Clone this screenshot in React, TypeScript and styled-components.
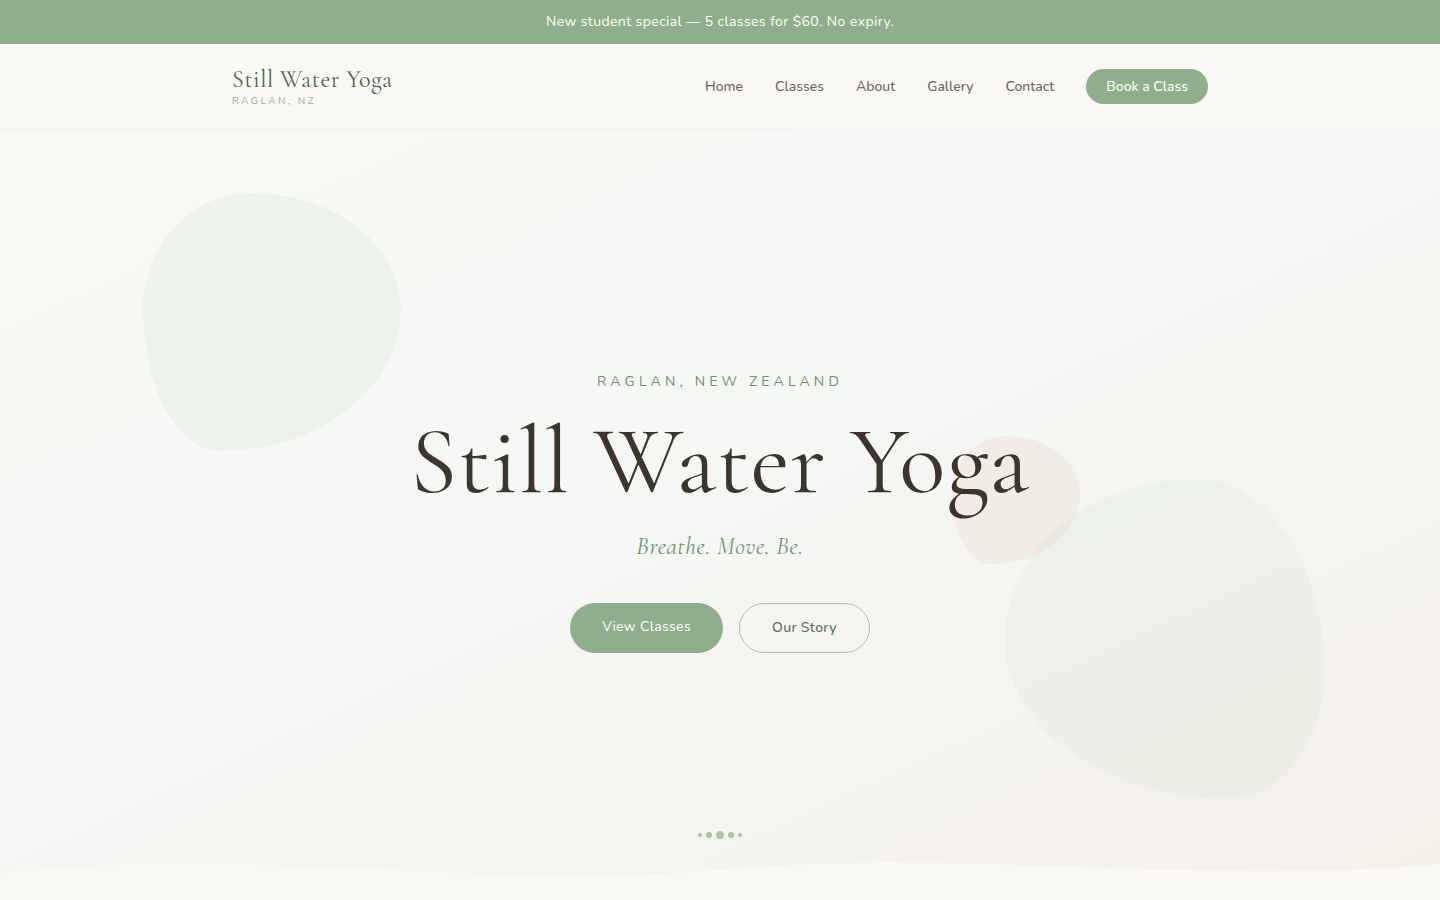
import React from "react";
import styled, { createGlobalStyle } from "styled-components";

const sans = `Nunito, "Noto Sans", "Open Sans", sans-serif`;
const serif = `"Cormorant Garamond", "Liberation Serif", serif`;

const GlobalStyle = createGlobalStyle`
  *, *::before, *::after { box-sizing: border-box; }
  body {
    margin: 0;
    background: #faf8f5;
    color: #3d352b;
    font-family: ${sans};
    overflow-x: hidden;
    -webkit-font-smoothing: antialiased;
  }
  a { color: inherit; text-decoration: none; }
`;

const Announcement = styled.p`
  margin: 0;
  padding: 12px 16px;
  background: #8fae8b;
  color: #ffffff;
  font-size: 14px;
  line-height: 20px;
  letter-spacing: 0.03em;
  text-align: center;
`;

const Header = styled.header`
  background: #faf8f5;
  border-bottom: 1px solid #edf1ec;
`;

const HeaderInner = styled.div`
  display: flex;
  align-items: center;
  justify-content: space-between;
  max-width: 1024px;
  margin: 0 auto;
  padding: 20px 24px;
`;

const Brand = styled.a`
  display: flex;
  flex-direction: column;
  padding-bottom: 3px;
`;

const BrandName = styled.span`
  color: #4a6548;
  font-family: ${serif};
  font-size: 24px;
  line-height: 32px;
  letter-spacing: 0.025em;
`;

const BrandPlace = styled.span`
  color: #8fae8b;
  font-size: 10px;
  line-height: 10px;
  letter-spacing: 0.25em;
  text-transform: uppercase;
`;

const Nav = styled.nav`
  display: flex;
  align-items: center;
  gap: 32px;
`;

const NavLink = styled.a`
  color: #736556;
  font-size: 14px;
  font-weight: 500;
  line-height: 19px;
`;

const BookLink = styled(NavLink)`
  padding: 8px 20px;
  border-radius: 18px;
  background: #8fae8b;
  color: #ffffff;
`;

const Hero = styled.section`
  position: relative;
  display: flex;
  align-items: center;
  justify-content: center;
  min-height: 85vh;
  overflow: hidden;
  background: linear-gradient(155deg, #faf8f5 0%, #f4f7f4 47%, #f5efe9 100%);
`;

const Blob = styled.span<{ $size: number; $color: string }>`
  position: absolute;
  width: ${(p) => p.$size}px;
  height: ${(p) => p.$size}px;
  background: ${(p) => p.$color};
  border-radius: 42% 58% 70% 30% / 45% 45% 55% 55%;
`;

const LeftBlob = styled(Blob)`
  top: 63px;
  left: 143px;
`;

const RightBlob = styled(Blob)`
  right: 8%;
  bottom: 96px;
  border-radius: 60% 40% 30% 70% / 50% 60% 40% 50%;
`;

const SandBlob = styled(Blob)`
  top: 40%;
  right: 25%;
`;

const HeroContent = styled.div`
  position: relative;
  display: flex;
  flex-direction: column;
  align-items: center;
  padding: 0 24px;
  text-align: center;
`;

const Eyebrow = styled.p`
  margin: 0 0 24px;
  color: #6b9468;
  font-size: 14px;
  line-height: 20px;
  letter-spacing: 0.3em;
  text-transform: uppercase;
`;

const Title = styled.h1`
  margin: 0 0 24px;
  color: #3d352b;
  font-family: ${serif};
  font-size: 96px;
  font-weight: 400;
  line-height: 91px;
  letter-spacing: 0.01em;
`;

const Tagline = styled.p`
  margin: 0 0 40px;
  color: #6b9468;
  font-family: ${serif};
  font-size: 24px;
  font-style: italic;
  line-height: 32px;
  letter-spacing: 0.025em;
`;

const Actions = styled.div`
  display: flex;
  gap: 16px;
`;

const Action = styled.a`
  padding: 14px 32px;
  border-radius: 25px;
  font-size: 14px;
  line-height: 20px;
  letter-spacing: 0.025em;
`;

const PrimaryAction = styled(Action)`
  background: #8fae8b;
  color: #ffffff;
`;

const OutlineAction = styled(Action)`
  border: 1px solid #a8c5a5;
  color: #547051;
  font-weight: 500;
`;

const Dots = styled.div`
  position: absolute;
  bottom: 56px;
  left: 0;
  right: 0;
  display: flex;
  align-items: center;
  justify-content: center;
  gap: 4px;
`;

const Dot = styled.span<{ $size: number }>`
  width: ${(p) => p.$size}px;
  height: ${(p) => p.$size}px;
  border-radius: 50%;
  background: #a8c5a5;
`;

const Wave = styled.svg`
  position: absolute;
  bottom: 0;
  left: 0;
  display: block;
  width: 100%;
  height: 60px;
`;

const links = ["Home", "Classes", "About", "Gallery", "Contact"];
const dotSizes = [4, 6, 8, 6, 4];

export default function App() {
  return (
    <>
      <GlobalStyle />
      <Announcement>New student special — 5 classes for $60. No expiry.</Announcement>
      <Header>
        <HeaderInner>
          <Brand href="#home">
            <BrandName>Still Water Yoga</BrandName>
            <BrandPlace>Raglan, NZ</BrandPlace>
          </Brand>
          <Nav aria-label="Main">
            {links.map((label) => (
              <NavLink key={label} href={`#${label.toLowerCase()}`}>
                {label}
              </NavLink>
            ))}
            <BookLink href="#book">Book a Class</BookLink>
          </Nav>
        </HeaderInner>
      </Header>
      <main>
        <Hero id="home">
          <LeftBlob $size={258} $color="rgba(150, 200, 165, 0.11)" aria-hidden="true" />
          <RightBlob $size={320} $color="rgba(165, 208, 182, 0.09)" aria-hidden="true" />
          <SandBlob $size={128} $color="rgba(232, 200, 178, 0.2)" aria-hidden="true" />
          <HeroContent>
            <Eyebrow>Raglan, New Zealand</Eyebrow>
            <Title>Still Water Yoga</Title>
            <Tagline>Breathe. Move. Be.</Tagline>
            <Actions>
              <PrimaryAction href="#classes">View Classes</PrimaryAction>
              <OutlineAction href="#about">Our Story</OutlineAction>
            </Actions>
          </HeroContent>
          <Dots aria-hidden="true">
            {dotSizes.map((size, i) => (
              <Dot key={i} $size={size} />
            ))}
          </Dots>
          <Wave viewBox="0 0 1440 60" preserveAspectRatio="none" aria-hidden="true">
            <path
              d="M0 39C240 9 480 56 720 35C960 13 1200 51 1440 29V60H0Z"
              fill="#faf8f5"
            />
          </Wave>
        </Hero>
      </main>
    </>
  );
}
